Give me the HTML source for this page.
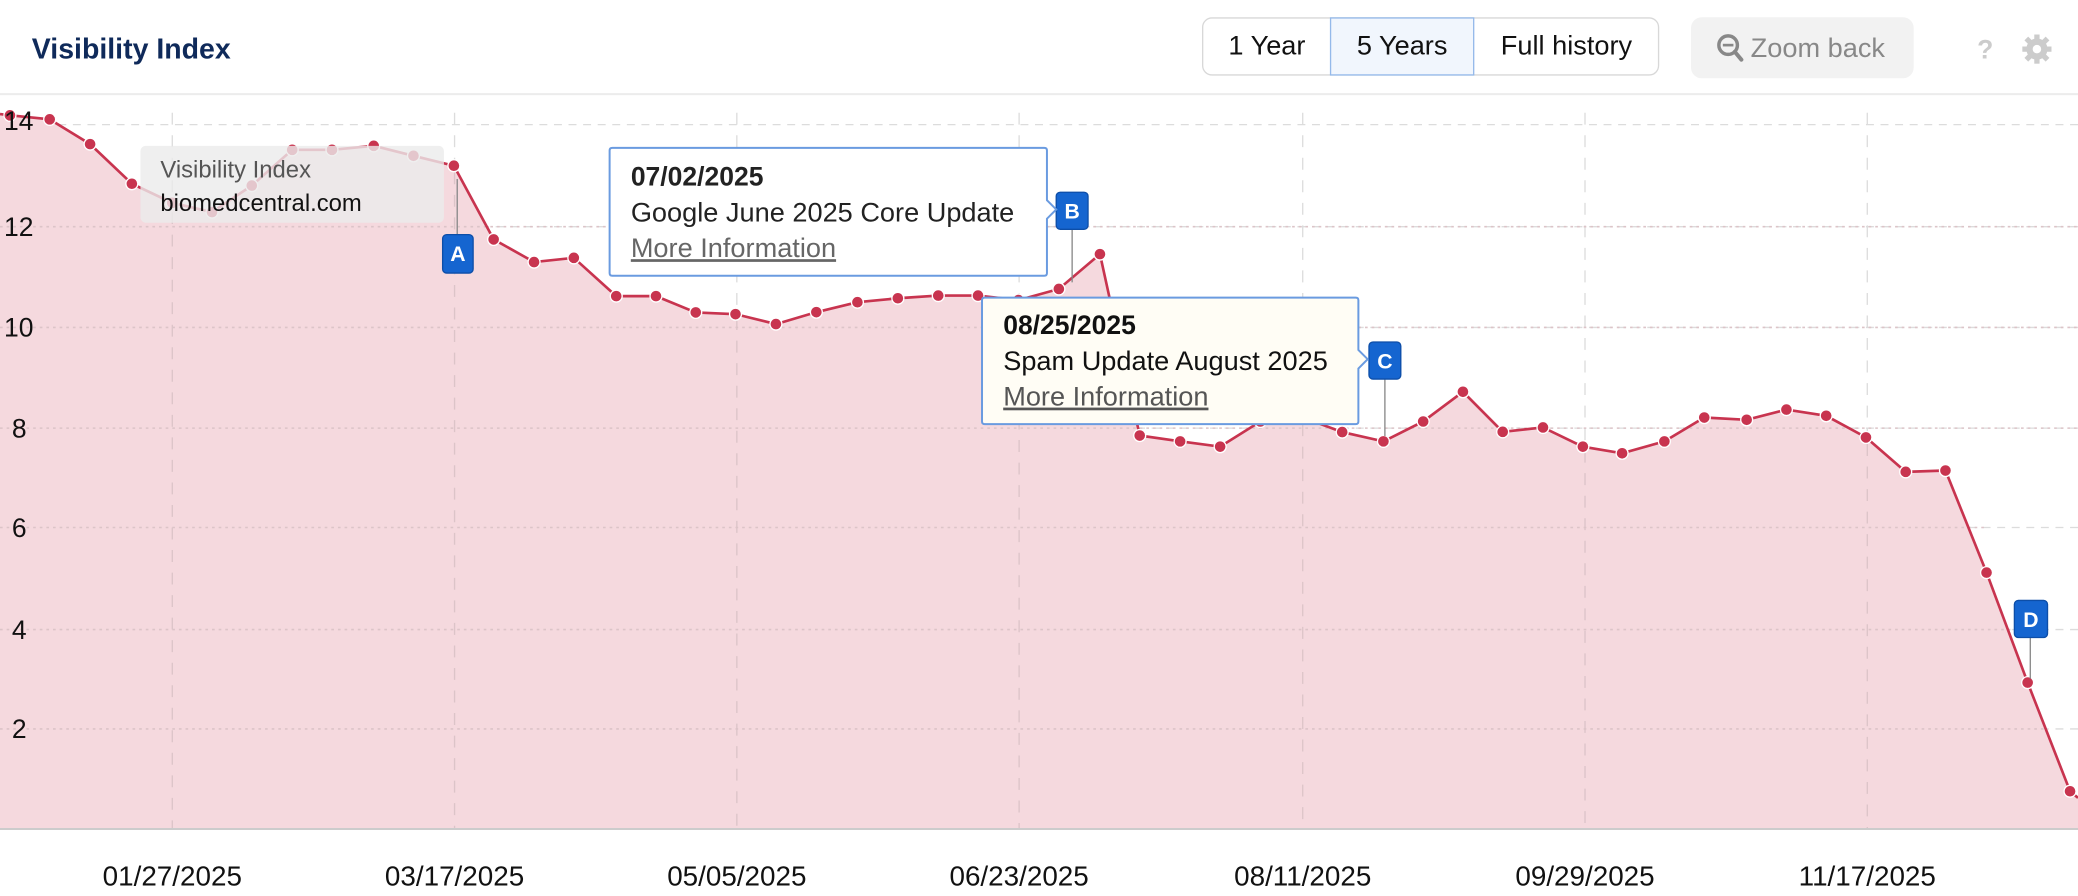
<!DOCTYPE html>
<html><head><meta charset="utf-8"><style>
html,body{margin:0;padding:0;background:#fff;}
svg{display:block;font-family:"Liberation Sans",Arial,sans-serif;}
</style></head><body>
<svg width="2078" height="896" viewBox="0 0 1568 676" xmlns="http://www.w3.org/2000/svg">
<rect x="0" y="0" width="1568" height="676" fill="#fff"/>
<text x="24" y="44" font-size="21.5" font-weight="bold" fill="#0f2a5a">Visibility Index</text>
<!-- buttons -->
<rect x="907.5" y="13.5" width="344" height="43" rx="7" fill="#fff" stroke="#d8d8d8"/>
<rect x="1004" y="13.5" width="108" height="43" fill="#f1f6fd" stroke="#94b9ea"/>
<text x="956" y="41" font-size="20.5" text-anchor="middle" fill="#111">1 Year</text>
<text x="1058" y="41" font-size="20.5" text-anchor="middle" fill="#111">5 Years</text>
<text x="1182" y="41" font-size="20.5" text-anchor="middle" fill="#111">Full history</text>
<rect x="1276" y="13" width="168" height="46" rx="8" fill="#f2f2f2"/>
<circle cx="1304" cy="34" r="7" fill="none" stroke="#888" stroke-width="2.6"/>
<line x1="1300" y1="34" x2="1308" y2="34" stroke="#888" stroke-width="2"/>
<line x1="1309" y1="39" x2="1314" y2="45" stroke="#888" stroke-width="3" stroke-linecap="round"/>
<text x="1321" y="43" font-size="20.5" fill="#888">Zoom back</text>
<text x="1498" y="44" font-size="20" font-weight="bold" text-anchor="middle" fill="#ccc">?</text>
<g transform="translate(1537,37)" fill="#ccc">
<circle r="8"/>
<g stroke="#ccc" stroke-width="4"><line x1="0" y1="-11" x2="0" y2="11"/><line x1="-11" y1="0" x2="11" y2="0"/><line x1="-8" y1="-8" x2="8" y2="8"/><line x1="-8" y1="8" x2="8" y2="-8"/></g>
<circle r="3.2" fill="#fff"/>
</g>
<line x1="0" y1="71" x2="1568" y2="71" stroke="#ececec" stroke-width="1.5"/>
<!-- grid -->
<g stroke="#dcdcdc" stroke-width="1" stroke-dasharray="6,5">
<line x1="0" y1="94" x2="1568" y2="94"/><line x1="0" y1="171" x2="1568" y2="171"/><line x1="0" y1="247" x2="1568" y2="247"/><line x1="0" y1="323" x2="1568" y2="323"/><line x1="0" y1="398" x2="1568" y2="398"/><line x1="0" y1="475" x2="1568" y2="475"/><line x1="0" y1="550" x2="1568" y2="550"/>
</g>
<g stroke="#dcdcdc" stroke-width="1" stroke-dasharray="9,8">
<line x1="130" y1="85" x2="130" y2="625"/><line x1="343" y1="85" x2="343" y2="625"/><line x1="556" y1="85" x2="556" y2="625"/><line x1="769" y1="85" x2="769" y2="625"/><line x1="983" y1="85" x2="983" y2="625"/><line x1="1196" y1="85" x2="1196" y2="625"/><line x1="1409" y1="85" x2="1409" y2="625"/>
</g>
<!-- area -->
<path d="M0,86 L7.5,87 L37.5,90 L68,108.7 L99.5,138.6 L130,153 L160,160 L190,140 L220.5,113 L250.5,113 L282,110 L312,117.5 L342.5,125 L372.5,180.6 L403,197.7 L433,194.5 L465,223.4 L495,223.4 L525,235.7 L555,237 L585.5,244.5 L616,235.5 L647,228 L677.5,225 L708,223 L738,223 L768.5,226.4 L799,218 L830,191.7 L860,328.6 L890.5,333 L920.7,337 L951,318 L982,314.5 L1012.8,326 L1043.9,333 L1073.9,318 L1103.9,295.6 L1133.9,325.8 L1164.3,322.5 L1194.4,337 L1224,342 L1255.9,333 L1286,315 L1318,316.7 L1348,309 L1378,313.7 L1408,330 L1438,356 L1468,355 L1499,432 L1530,515 L1562,597 L1568,602 L1568,625 L0,625 Z" fill="#f5d9de"/>
<g stroke="#dcc4c8" stroke-width="1" stroke-dasharray="9,8">
<line x1="130" y1="160" x2="130" y2="625"/><line x1="343" y1="130" x2="343" y2="625"/><line x1="556" y1="240" x2="556" y2="625"/><line x1="769" y1="230" x2="769" y2="625"/><line x1="983" y1="320" x2="983" y2="625"/><line x1="1196" y1="340" x2="1196" y2="625"/><line x1="1409" y1="335" x2="1409" y2="625"/>
</g>
<g stroke="#dcc4c8" stroke-width="1.2" stroke-dasharray="2,3">
<line x1="0" y1="171" x2="1568" y2="171"/><line x1="0" y1="247" x2="1568" y2="247"/><line x1="0" y1="323" x2="1568" y2="323"/><line x1="0" y1="398" x2="1500" y2="398"/><line x1="0" y1="475" x2="1520" y2="475"/><line x1="0" y1="550" x2="1545" y2="550"/>
</g>
<path d="M0,86 L7.5,87 L37.5,90 L68,108.7 L99.5,138.6 L130,153 L160,160 L190,140 L220.5,113 L250.5,113 L282,110 L312,117.5 L342.5,125 L372.5,180.6 L403,197.7 L433,194.5 L465,223.4 L495,223.4 L525,235.7 L555,237 L585.5,244.5 L616,235.5 L647,228 L677.5,225 L708,223 L738,223 L768.5,226.4 L799,218 L830,191.7 L860,328.6 L890.5,333 L920.7,337 L951,318 L982,314.5 L1012.8,326 L1043.9,333 L1073.9,318 L1103.9,295.6 L1133.9,325.8 L1164.3,322.5 L1194.4,337 L1224,342 L1255.9,333 L1286,315 L1318,316.7 L1348,309 L1378,313.7 L1408,330 L1438,356 L1468,355 L1499,432 L1530,515 L1562,597 L1568,602" fill="none" stroke="#c8344f" stroke-width="2"/>
<g fill="#c8344f" stroke="#fff" stroke-width="1">
<circle cx="7.5" cy="87" r="4.5"/><circle cx="37.5" cy="90" r="4.5"/><circle cx="68" cy="108.7" r="4.5"/><circle cx="99.5" cy="138.6" r="4.5"/><circle cx="130" cy="153" r="4.5"/><circle cx="160" cy="160" r="4.5"/><circle cx="190" cy="140" r="4.5"/><circle cx="220.5" cy="113" r="4.5"/><circle cx="250.5" cy="113" r="4.5"/><circle cx="282" cy="110" r="4.5"/><circle cx="312" cy="117.5" r="4.5"/><circle cx="342.5" cy="125" r="4.5"/><circle cx="372.5" cy="180.6" r="4.5"/><circle cx="403" cy="197.7" r="4.5"/><circle cx="433" cy="194.5" r="4.5"/><circle cx="465" cy="223.4" r="4.5"/><circle cx="495" cy="223.4" r="4.5"/><circle cx="525" cy="235.7" r="4.5"/><circle cx="555" cy="237" r="4.5"/><circle cx="585.5" cy="244.5" r="4.5"/><circle cx="616" cy="235.5" r="4.5"/><circle cx="647" cy="228" r="4.5"/><circle cx="677.5" cy="225" r="4.5"/><circle cx="708" cy="223" r="4.5"/><circle cx="738" cy="223" r="4.5"/><circle cx="768.5" cy="226.4" r="4.5"/><circle cx="799" cy="218" r="4.5"/><circle cx="830" cy="191.7" r="4.5"/><circle cx="860" cy="328.6" r="4.5"/><circle cx="890.5" cy="333" r="4.5"/><circle cx="920.7" cy="337" r="4.5"/><circle cx="951" cy="318" r="4.5"/><circle cx="982" cy="314.5" r="4.5"/><circle cx="1012.8" cy="326" r="4.5"/><circle cx="1043.9" cy="333" r="4.5"/><circle cx="1073.9" cy="318" r="4.5"/><circle cx="1103.9" cy="295.6" r="4.5"/><circle cx="1133.9" cy="325.8" r="4.5"/><circle cx="1164.3" cy="322.5" r="4.5"/><circle cx="1194.4" cy="337" r="4.5"/><circle cx="1224" cy="342" r="4.5"/><circle cx="1255.9" cy="333" r="4.5"/><circle cx="1286" cy="315" r="4.5"/><circle cx="1318" cy="316.7" r="4.5"/><circle cx="1348" cy="309" r="4.5"/><circle cx="1378" cy="313.7" r="4.5"/><circle cx="1408" cy="330" r="4.5"/><circle cx="1438" cy="356" r="4.5"/><circle cx="1468" cy="355" r="4.5"/><circle cx="1499" cy="432" r="4.5"/><circle cx="1530" cy="515" r="4.5"/><circle cx="1562" cy="597" r="4.5"/>
</g>
<!-- y labels -->
<g font-size="20" fill="#111">
<text x="3" y="98">14</text><text x="3" y="178">12</text><text x="3" y="254">10</text><text x="9" y="330">8</text><text x="9" y="405">6</text><text x="9" y="482">4</text><text x="9" y="557">2</text>
</g>
<line x1="0" y1="625.5" x2="1568" y2="625.5" stroke="#ccc" stroke-width="1.5"/>
<g font-size="21" fill="#111" text-anchor="middle">
<text x="130" y="668">01/27/2025</text><text x="343" y="668">03/17/2025</text><text x="556" y="668">05/05/2025</text><text x="769" y="668">06/23/2025</text><text x="983" y="668">08/11/2025</text><text x="1196" y="668">09/29/2025</text><text x="1409" y="668">11/17/2025</text>
</g>
<!-- hover tooltip -->
<rect x="106" y="110" width="229" height="58" rx="4" fill="#ebebeb" fill-opacity="0.8"/>
<text x="121" y="134" font-size="18" fill="#555">Visibility Index</text>
<text x="121" y="159" font-size="18" fill="#111">biomedcentral.com</text>
<!-- flags -->
<g stroke="#888" stroke-width="1"><line x1="345" y1="135" x2="345" y2="177"/><line x1="809" y1="173" x2="809" y2="213"/><line x1="1045" y1="286" x2="1045" y2="329"/><line x1="1532" y1="481" x2="1532" y2="512"/></g>
<g fill="#1565d0" stroke="#0d4ea8" stroke-width="1">
<rect x="334" y="177" width="23" height="29" rx="3"/><rect x="797" y="145" width="24" height="28" rx="3"/><rect x="1033" y="258" width="24" height="28" rx="3"/><rect x="1520" y="453" width="25" height="28" rx="3"/>
</g>
<g fill="#fff" font-size="16" font-weight="bold" text-anchor="middle">
<text x="345.5" y="197">A</text><text x="809" y="165">B</text><text x="1045" y="278">C</text><text x="1532.5" y="473">D</text>
</g>
<!-- tooltip 1 -->
<path d="M462,111.5 H788 Q790,111.5 790,113.5 V151 L797,158 L790,165 V206 Q790,208 788,208 H462 Q460,208 460,206 V113.5 Q460,111.5 462,111.5 Z" fill="#fff" stroke="#6a9be0" stroke-width="1.5"/>
<text x="476" y="140" font-size="20" font-weight="bold" fill="#222">07/02/2025</text>
<text x="476" y="167" font-size="20.5" fill="#222">Google June 2025 Core Update</text>
<text x="476" y="194" font-size="20.5" fill="#666" text-decoration="underline">More Information</text>
<!-- tooltip 2 -->
<path d="M743,224.5 H1023 Q1025,224.5 1025,226.5 V264 L1032,271 L1025,278 V318 Q1025,320 1023,320 H743 Q741,320 741,318 V226.5 Q741,224.5 743,224.5 Z" fill="#fffdf5" stroke="#6a9be0" stroke-width="1.5"/>
<text x="757" y="252" font-size="20" font-weight="bold" fill="#111">08/25/2025</text>
<text x="757" y="279" font-size="20.5" fill="#111">Spam Update August 2025</text>
<text x="757" y="306" font-size="20.5" fill="#555" text-decoration="underline">More Information</text>
</svg>
</body></html>
